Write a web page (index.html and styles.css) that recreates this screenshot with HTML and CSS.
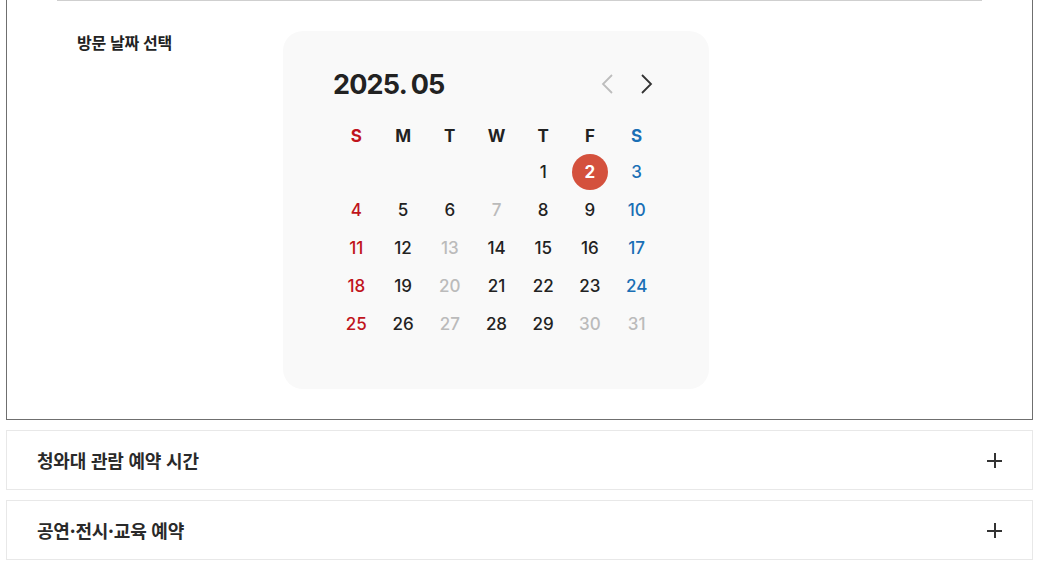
FILE: index.html
```
<!DOCTYPE html>
<html lang="ko">
<head>
<meta charset="utf-8">
<title>방문 날짜 선택</title>
<link rel="stylesheet" href="styles.css">
</head>
<body>
<div class="page">
  <section class="date-box">
    <div class="divider"></div>
    <div class="date-row">
      <h3 class="label">방문 날짜 선택</h3>
      <div class="calendar">
        <div class="cal-head">
          <div class="cal-title">2025. 05</div>
          <div class="cal-nav">
            <button class="nav-btn prev" aria-label="이전 달">
              <svg width="14" height="22" viewBox="0 0 14 22"><path d="M12 2 L3 11 L12 20" fill="none" stroke="currentColor" stroke-width="1.8"/></svg>
            </button>
            <button class="nav-btn next" aria-label="다음 달">
              <svg width="14" height="22" viewBox="0 0 14 22"><path d="M2 2 L11 11 L2 20" fill="none" stroke="currentColor" stroke-width="1.8"/></svg>
            </button>
          </div>
        </div>
        <div class="cal-grid week">
          <span class="sun">S</span><span>M</span><span>T</span><span>W</span><span>T</span><span>F</span><span class="sat">S</span>
        </div>
        <div class="cal-grid days">
          <span></span><span></span><span></span><span></span>
          <span>1</span><span class="sel"><i>2</i></span><span class="sat">3</span>
          <span class="sun">4</span><span>5</span><span>6</span><span class="off">7</span><span>8</span><span>9</span><span class="sat">10</span>
          <span class="sun">11</span><span>12</span><span class="off">13</span><span>14</span><span>15</span><span>16</span><span class="sat">17</span>
          <span class="sun">18</span><span>19</span><span class="off">20</span><span>21</span><span>22</span><span>23</span><span class="sat">24</span>
          <span class="sun">25</span><span>26</span><span class="off">27</span><span>28</span><span>29</span><span class="off">30</span><span class="off">31</span>
        </div>
      </div>
    </div>
  </section>
  <div class="acc">
    <span class="acc-title">청와대 관람 예약 시간</span>
    <span class="plus"></span>
  </div>
  <div class="acc">
    <span class="acc-title">공연·전시·교육 예약</span>
    <span class="plus"></span>
  </div>
</div>
</body>
</html>
```
FILE: styles.css
```
* { box-sizing: border-box; }
html, body { margin: 0; padding: 0; background: #fff; }
body {
  font-family: Inter, "Noto Sans CJK KR", "Noto Sans", sans-serif;
  color: #222;
}
.page {
  padding: 0 6px;
  display: flex;
  flex-direction: column;
  gap: 10px;
}
.date-box {
  border: 1px solid #6f6f6f;
  border-top: none;
  padding: 0 50px 30px 50px;
}
.divider {
  height: 1px;
  background: #cfcfcf;
}
.date-row {
  display: flex;
  align-items: flex-start;
  padding-top: 30px;
}
.label {
  margin: 0;
  width: 226px;
  padding-left: 20px;
  font-family: "Noto Sans CJK KR", sans-serif;
  font-size: 16px;
  font-weight: 700;
  line-height: 22px;
  color: #222;
  letter-spacing: -0.3px;
}
.calendar {
  width: 426px;
  background: #f9f9f9;
  border-radius: 20px;
  padding: 33px 49px 46px 50px;
}
.cal-head {
  display: flex;
  align-items: center;
  justify-content: space-between;
  height: 40px;
}
.cal-title {
  font-size: 27px;
  font-weight: 700;
  letter-spacing: -0.8px;
  color: #222;
  word-spacing: -1px;
}
.cal-nav {
  display: flex;
  gap: 26px;
  padding-right: 6px;
}
.nav-btn {
  border: 0;
  background: none;
  padding: 0;
  width: 14px;
  height: 22px;
  display: flex;
}
.nav-btn.prev { color: #bdbdbd; }
.nav-btn.next { color: #333; }
.cal-grid {
  display: grid;
  grid-template-columns: repeat(7, 1fr);
  text-align: center;
  font-size: 17px;
  font-weight: 500;
}
.week {
  margin-top: 15px;
  font-weight: 700;
}
.week span {
  height: 34px;
  line-height: 34px;
}
.days span {
  height: 38px;
  display: flex;
  align-items: center;
  justify-content: center;
  color: #222;
}
.cal-grid .sun { color: #c0141c; }
.cal-grid .sat { color: #1a6fb5; }
.cal-grid .off { color: #bbbbbb; }
.sel i {
  font-style: normal;
  width: 36px;
  height: 36px;
  border-radius: 50%;
  background: #d4513d;
  color: #fff;
  font-weight: 700;
  display: flex;
  align-items: center;
  justify-content: center;
}
.acc {
  height: 60px;
  border: 1px solid #e8e8e8;
  display: flex;
  align-items: center;
  justify-content: space-between;
  padding: 0 30px 0 30px;
}
.acc-title {
  font-family: "Noto Sans CJK KR", sans-serif;
  font-size: 18px;
  font-weight: 700;
  color: #2a2a2a;
  letter-spacing: -0.2px;
}
.plus {
  position: relative;
  width: 15px;
  height: 15px;
}
.plus::before, .plus::after {
  content: "";
  position: absolute;
  background: #333;
}
.plus::before { left: 0; right: 0; top: 7px; height: 2px; }
.plus::after { top: 0; bottom: 0; left: 7px; width: 2px; }
```
